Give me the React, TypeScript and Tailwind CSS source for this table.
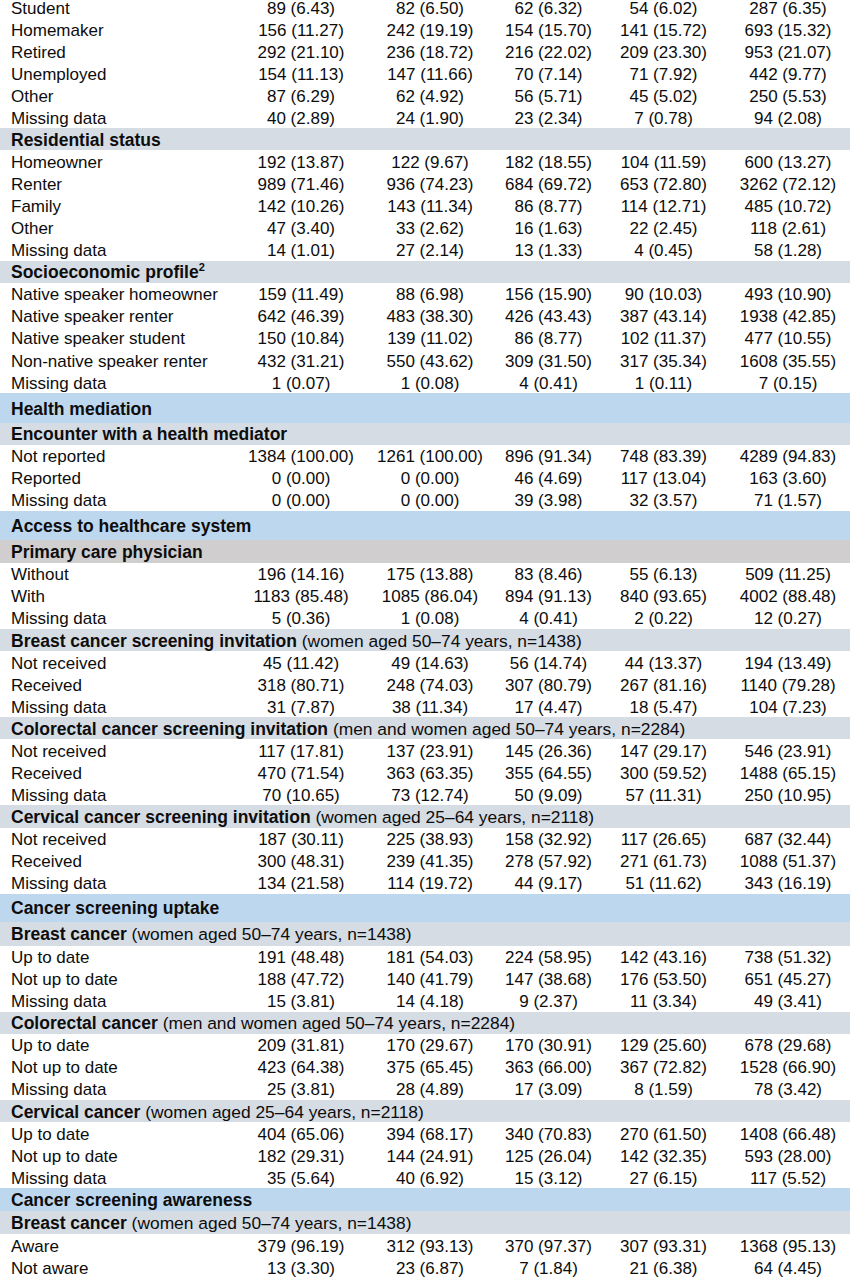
type Cells = [string, string, string, string, string];

type Row =
  | { kind: "data"; label: string; cells: Cells }
  | { kind: "sub"; bold: string; rest?: string; sup?: string; tone?: "blue" | "stone"; h?: string }
  | { kind: "sec"; text: string; h: string };

const rows: Row[] = [
  { kind: "data", label: "Student", cells: ["89 (6.43)", "82 (6.50)", "62 (6.32)", "54 (6.02)", "287 (6.35)"] },
  { kind: "data", label: "Homemaker", cells: ["156 (11.27)", "242 (19.19)", "154 (15.70)", "141 (15.72)", "693 (15.32)"] },
  { kind: "data", label: "Retired", cells: ["292 (21.10)", "236 (18.72)", "216 (22.02)", "209 (23.30)", "953 (21.07)"] },
  { kind: "data", label: "Unemployed", cells: ["154 (11.13)", "147 (11.66)", "70 (7.14)", "71 (7.92)", "442 (9.77)"] },
  { kind: "data", label: "Other", cells: ["87 (6.29)", "62 (4.92)", "56 (5.71)", "45 (5.02)", "250 (5.53)"] },
  { kind: "data", label: "Missing data", cells: ["40 (2.89)", "24 (1.90)", "23 (2.34)", "7 (0.78)", "94 (2.08)"] },

  { kind: "sub", bold: "Residential status" },
  { kind: "data", label: "Homeowner", cells: ["192 (13.87)", "122 (9.67)", "182 (18.55)", "104 (11.59)", "600 (13.27)"] },
  { kind: "data", label: "Renter", cells: ["989 (71.46)", "936 (74.23)", "684 (69.72)", "653 (72.80)", "3262 (72.12)"] },
  { kind: "data", label: "Family", cells: ["142 (10.26)", "143 (11.34)", "86 (8.77)", "114 (12.71)", "485 (10.72)"] },
  { kind: "data", label: "Other", cells: ["47 (3.40)", "33 (2.62)", "16 (1.63)", "22 (2.45)", "118 (2.61)"] },
  { kind: "data", label: "Missing data", cells: ["14 (1.01)", "27 (2.14)", "13 (1.33)", "4 (0.45)", "58 (1.28)"] },

  { kind: "sub", bold: "Socioeconomic profile", sup: "2" },
  { kind: "data", label: "Native speaker homeowner", cells: ["159 (11.49)", "88 (6.98)", "156 (15.90)", "90 (10.03)", "493 (10.90)"] },
  { kind: "data", label: "Native speaker renter", cells: ["642 (46.39)", "483 (38.30)", "426 (43.43)", "387 (43.14)", "1938 (42.85)"] },
  { kind: "data", label: "Native speaker student", cells: ["150 (10.84)", "139 (11.02)", "86 (8.77)", "102 (11.37)", "477 (10.55)"] },
  { kind: "data", label: "Non-native speaker renter", cells: ["432 (31.21)", "550 (43.62)", "309 (31.50)", "317 (35.34)", "1608 (35.55)"] },
  { kind: "data", label: "Missing data", cells: ["1 (0.07)", "1 (0.08)", "4 (0.41)", "1 (0.11)", "7 (0.15)"] },

  { kind: "sec", text: "Health mediation", h: "h-[30px]" },
  { kind: "sub", bold: "Encounter with a health mediator", h: "h-[21.7px]" },
  { kind: "data", label: "Not reported", cells: ["1384 (100.00)", "1261 (100.00)", "896 (91.34)", "748 (83.39)", "4289 (94.83)"] },
  { kind: "data", label: "Reported", cells: ["0 (0.00)", "0 (0.00)", "46 (4.69)", "117 (13.04)", "163 (3.60)"] },
  { kind: "data", label: "Missing data", cells: ["0 (0.00)", "0 (0.00)", "39 (3.98)", "32 (3.57)", "71 (1.57)"] },

  { kind: "sec", text: "Access to healthcare system", h: "h-[28.5px]" },
  { kind: "sub", bold: "Primary care physician", tone: "stone", h: "h-[23.3px]" },
  { kind: "data", label: "Without", cells: ["196 (14.16)", "175 (13.88)", "83 (8.46)", "55 (6.13)", "509 (11.25)"] },
  { kind: "data", label: "With", cells: ["1183 (85.48)", "1085 (86.04)", "894 (91.13)", "840 (93.65)", "4002 (88.48)"] },
  { kind: "data", label: "Missing data", cells: ["5 (0.36)", "1 (0.08)", "4 (0.41)", "2 (0.22)", "12 (0.27)"] },

  { kind: "sub", bold: "Breast cancer screening invitation", rest: " (women aged 50–74 years, n=1438)" },
  { kind: "data", label: "Not received", cells: ["45 (11.42)", "49 (14.63)", "56 (14.74)", "44 (13.37)", "194 (13.49)"] },
  { kind: "data", label: "Received", cells: ["318 (80.71)", "248 (74.03)", "307 (80.79)", "267 (81.16)", "1140 (79.28)"] },
  { kind: "data", label: "Missing data", cells: ["31 (7.87)", "38 (11.34)", "17 (4.47)", "18 (5.47)", "104 (7.23)"] },

  { kind: "sub", bold: "Colorectal cancer screening invitation", rest: " (men and women aged 50–74 years, n=2284)" },
  { kind: "data", label: "Not received", cells: ["117 (17.81)", "137 (23.91)", "145 (26.36)", "147 (29.17)", "546 (23.91)"] },
  { kind: "data", label: "Received", cells: ["470 (71.54)", "363 (63.35)", "355 (64.55)", "300 (59.52)", "1488 (65.15)"] },
  { kind: "data", label: "Missing data", cells: ["70 (10.65)", "73 (12.74)", "50 (9.09)", "57 (11.31)", "250 (10.95)"] },

  { kind: "sub", bold: "Cervical cancer screening invitation", rest: " (women aged 25–64 years, n=2118)" },
  { kind: "data", label: "Not received", cells: ["187 (30.11)", "225 (38.93)", "158 (32.92)", "117 (26.65)", "687 (32.44)"] },
  { kind: "data", label: "Received", cells: ["300 (48.31)", "239 (41.35)", "278 (57.92)", "271 (61.73)", "1088 (51.37)"] },
  { kind: "data", label: "Missing data", cells: ["134 (21.58)", "114 (19.72)", "44 (9.17)", "51 (11.62)", "343 (16.19)"] },

  { kind: "sec", text: "Cancer screening uptake", h: "h-[28.5px]" },
  { kind: "sub", bold: "Breast cancer", rest: " (women aged 50–74 years, n=1438)", h: "h-[23.3px]" },
  { kind: "data", label: "Up to date", cells: ["191 (48.48)", "181 (54.03)", "224 (58.95)", "142 (43.16)", "738 (51.32)"] },
  { kind: "data", label: "Not up to date", cells: ["188 (47.72)", "140 (41.79)", "147 (38.68)", "176 (53.50)", "651 (45.27)"] },
  { kind: "data", label: "Missing data", cells: ["15 (3.81)", "14 (4.18)", "9 (2.37)", "11 (3.34)", "49 (3.41)"] },

  { kind: "sub", bold: "Colorectal cancer", rest: " (men and women aged 50–74 years, n=2284)" },
  { kind: "data", label: "Up to date", cells: ["209 (31.81)", "170 (29.67)", "170 (30.91)", "129 (25.60)", "678 (29.68)"] },
  { kind: "data", label: "Not up to date", cells: ["423 (64.38)", "375 (65.45)", "363 (66.00)", "367 (72.82)", "1528 (66.90)"] },
  { kind: "data", label: "Missing data", cells: ["25 (3.81)", "28 (4.89)", "17 (3.09)", "8 (1.59)", "78 (3.42)"] },

  { kind: "sub", bold: "Cervical cancer", rest: " (women aged 25–64 years, n=2118)" },
  { kind: "data", label: "Up to date", cells: ["404 (65.06)", "394 (68.17)", "340 (70.83)", "270 (61.50)", "1408 (66.48)"] },
  { kind: "data", label: "Not up to date", cells: ["182 (29.31)", "144 (24.91)", "125 (26.04)", "142 (32.35)", "593 (28.00)"] },
  { kind: "data", label: "Missing data", cells: ["35 (5.64)", "40 (6.92)", "15 (3.12)", "27 (6.15)", "117 (5.52)"] },

  { kind: "sec", text: "Cancer screening awareness", h: "h-[22.8px]" },
  { kind: "sub", bold: "Breast cancer", rest: " (women aged 50–74 years, n=1438)", h: "h-[23px]" },
  { kind: "data", label: "Aware", cells: ["379 (96.19)", "312 (93.13)", "370 (97.37)", "307 (93.31)", "1368 (95.13)"] },
  { kind: "data", label: "Not aware", cells: ["13 (3.30)", "23 (6.87)", "7 (1.84)", "21 (6.38)", "64 (4.45)"] },
];

// widths of the five count columns
const colW = ["w-[130px]", "w-[128px]", "w-[109px]", "w-[121px]", "w-[128px]"];

function DataRow({ label, cells }: { label: string; cells: Cells }) {
  return (
    <div className="flex h-[22.07px] items-center pt-[2px]">
      <div className="w-[236px] shrink-0 pl-[11px] whitespace-nowrap">{label}</div>
      {cells.map((c, i) => (
        <div key={i} className={`${colW[i]} shrink-0 text-center whitespace-nowrap`}>
          {c}
        </div>
      ))}
    </div>
  );
}

export default function App() {
  return (
    <div className="bg-white w-[852px] h-[1280px] overflow-hidden text-[#0d0d0d] text-[17px] leading-[15px] font-['Liberation_Sans',Arial,sans-serif]">
      <div className="w-[850px] -mt-[4px] flex flex-col">
        {rows.map((r, idx) => {
          if (r.kind === "data") return <DataRow key={idx} label={r.label} cells={r.cells} />;
          if (r.kind === "sec")
            return (
              <div key={idx} className={`${r.h} flex items-center pt-[2px] bg-[#bdd7ee] pl-[11px] font-bold text-[17.5px] whitespace-nowrap`}>
                {r.text}
              </div>
            );
          return (
            <div
              key={idx}
              className={`${r.h ?? "h-[22.07px]"} flex items-center pt-[2px] pl-[11px] whitespace-nowrap ${
                r.tone === "stone" ? "bg-[#d0cece]" : "bg-[#d6dce4]"
              }`}
            >
              <span className="font-bold text-[17.5px]">{r.bold}</span>
              {r.sup && <sup className="font-bold text-[11px] -top-[0.5em] relative">{r.sup}</sup>}
              {r.rest && <span className="whitespace-pre text-[17.4px]">{r.rest}</span>}
            </div>
          );
        })}
      </div>
    </div>
  );
}
